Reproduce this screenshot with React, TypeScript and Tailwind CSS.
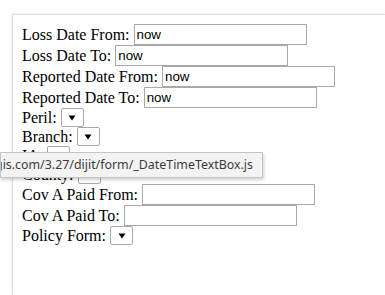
import React from 'react';

// Search form as shown inside a map widget panel, with the browser tooltip over it
const DateField: React.FC<{ label: string; value?: string }> = ({ label, value = '' }) => (
  <div className="flex h-[21px] items-center">
    <span>{label}</span>
    <input
      readOnly
      defaultValue={value}
      className="ml-[4px] h-[21px] w-[173px] border border-[#a9a9a9] bg-white px-[2px] text-[13.33px] text-black outline-none"
      style={{ fontFamily: '"Liberation Sans", Arial, sans-serif' }}
    />
  </div>
);

const SelectField: React.FC<{ label: string }> = ({ label }) => (
  <div className="flex h-[19px] items-center">
    <span>{label}</span>
    <span className="ml-[4px] flex h-[19px] w-[23px] items-center justify-center rounded-[2px] border border-[#a9a9a9] bg-white">
      <svg width="8" height="6" viewBox="0 0 8 6">
        <path d="M0.5 0.5 L7.5 0.5 L4 5.5 Z" fill="#000" />
      </svg>
    </span>
  </div>
);

const App: React.FC = () => {
  return (
    <div className="relative h-[295px] w-[385px] overflow-hidden bg-white">
      {/* Panel */}
      <div
        className="ml-[12px] mt-[14px] h-[281px] border-l border-t border-[#dedede] bg-white pl-[9px] pt-[9px] text-[16px] leading-[18px] text-black shadow-[-1px_-1px_2px_rgba(0,0,0,0.06)]"
        style={{ fontFamily: '"Liberation Serif", "Times New Roman", serif' }}
      >
        <DateField label="Loss Date From:" value="now" />
        <DateField label="Loss Date To:" value="now" />
        <DateField label="Reported Date From:" value="now" />
        <DateField label="Reported Date To:" value="now" />
        <SelectField label="Peril:" />
        <SelectField label="Branch:" />
        <SelectField label="IA:" />
        <SelectField label="County:" />
        <DateField label="Cov A Paid From:" />
        <DateField label="Cov A Paid To:" />
        <SelectField label="Policy Form:" />
      </div>

      {/* Browser tooltip */}
      <div className="absolute left-0 top-[152px] flex h-[26px] w-[263px] items-center justify-end overflow-hidden border border-[#c4c4c4] bg-[#f3f3f3] pr-[9px] shadow-[1px_2px_3px_rgba(0,0,0,0.18)]">
        <span
          className="whitespace-nowrap text-[12.4px] text-[#3c3c3c]"
          style={{ fontFamily: '"Noto Sans", "Open Sans", sans-serif' }}
        >
          https://js.arcgis.com/3.27/dijit/form/_DateTimeTextBox.js
        </span>
      </div>
    </div>
  );
};

export default App;
